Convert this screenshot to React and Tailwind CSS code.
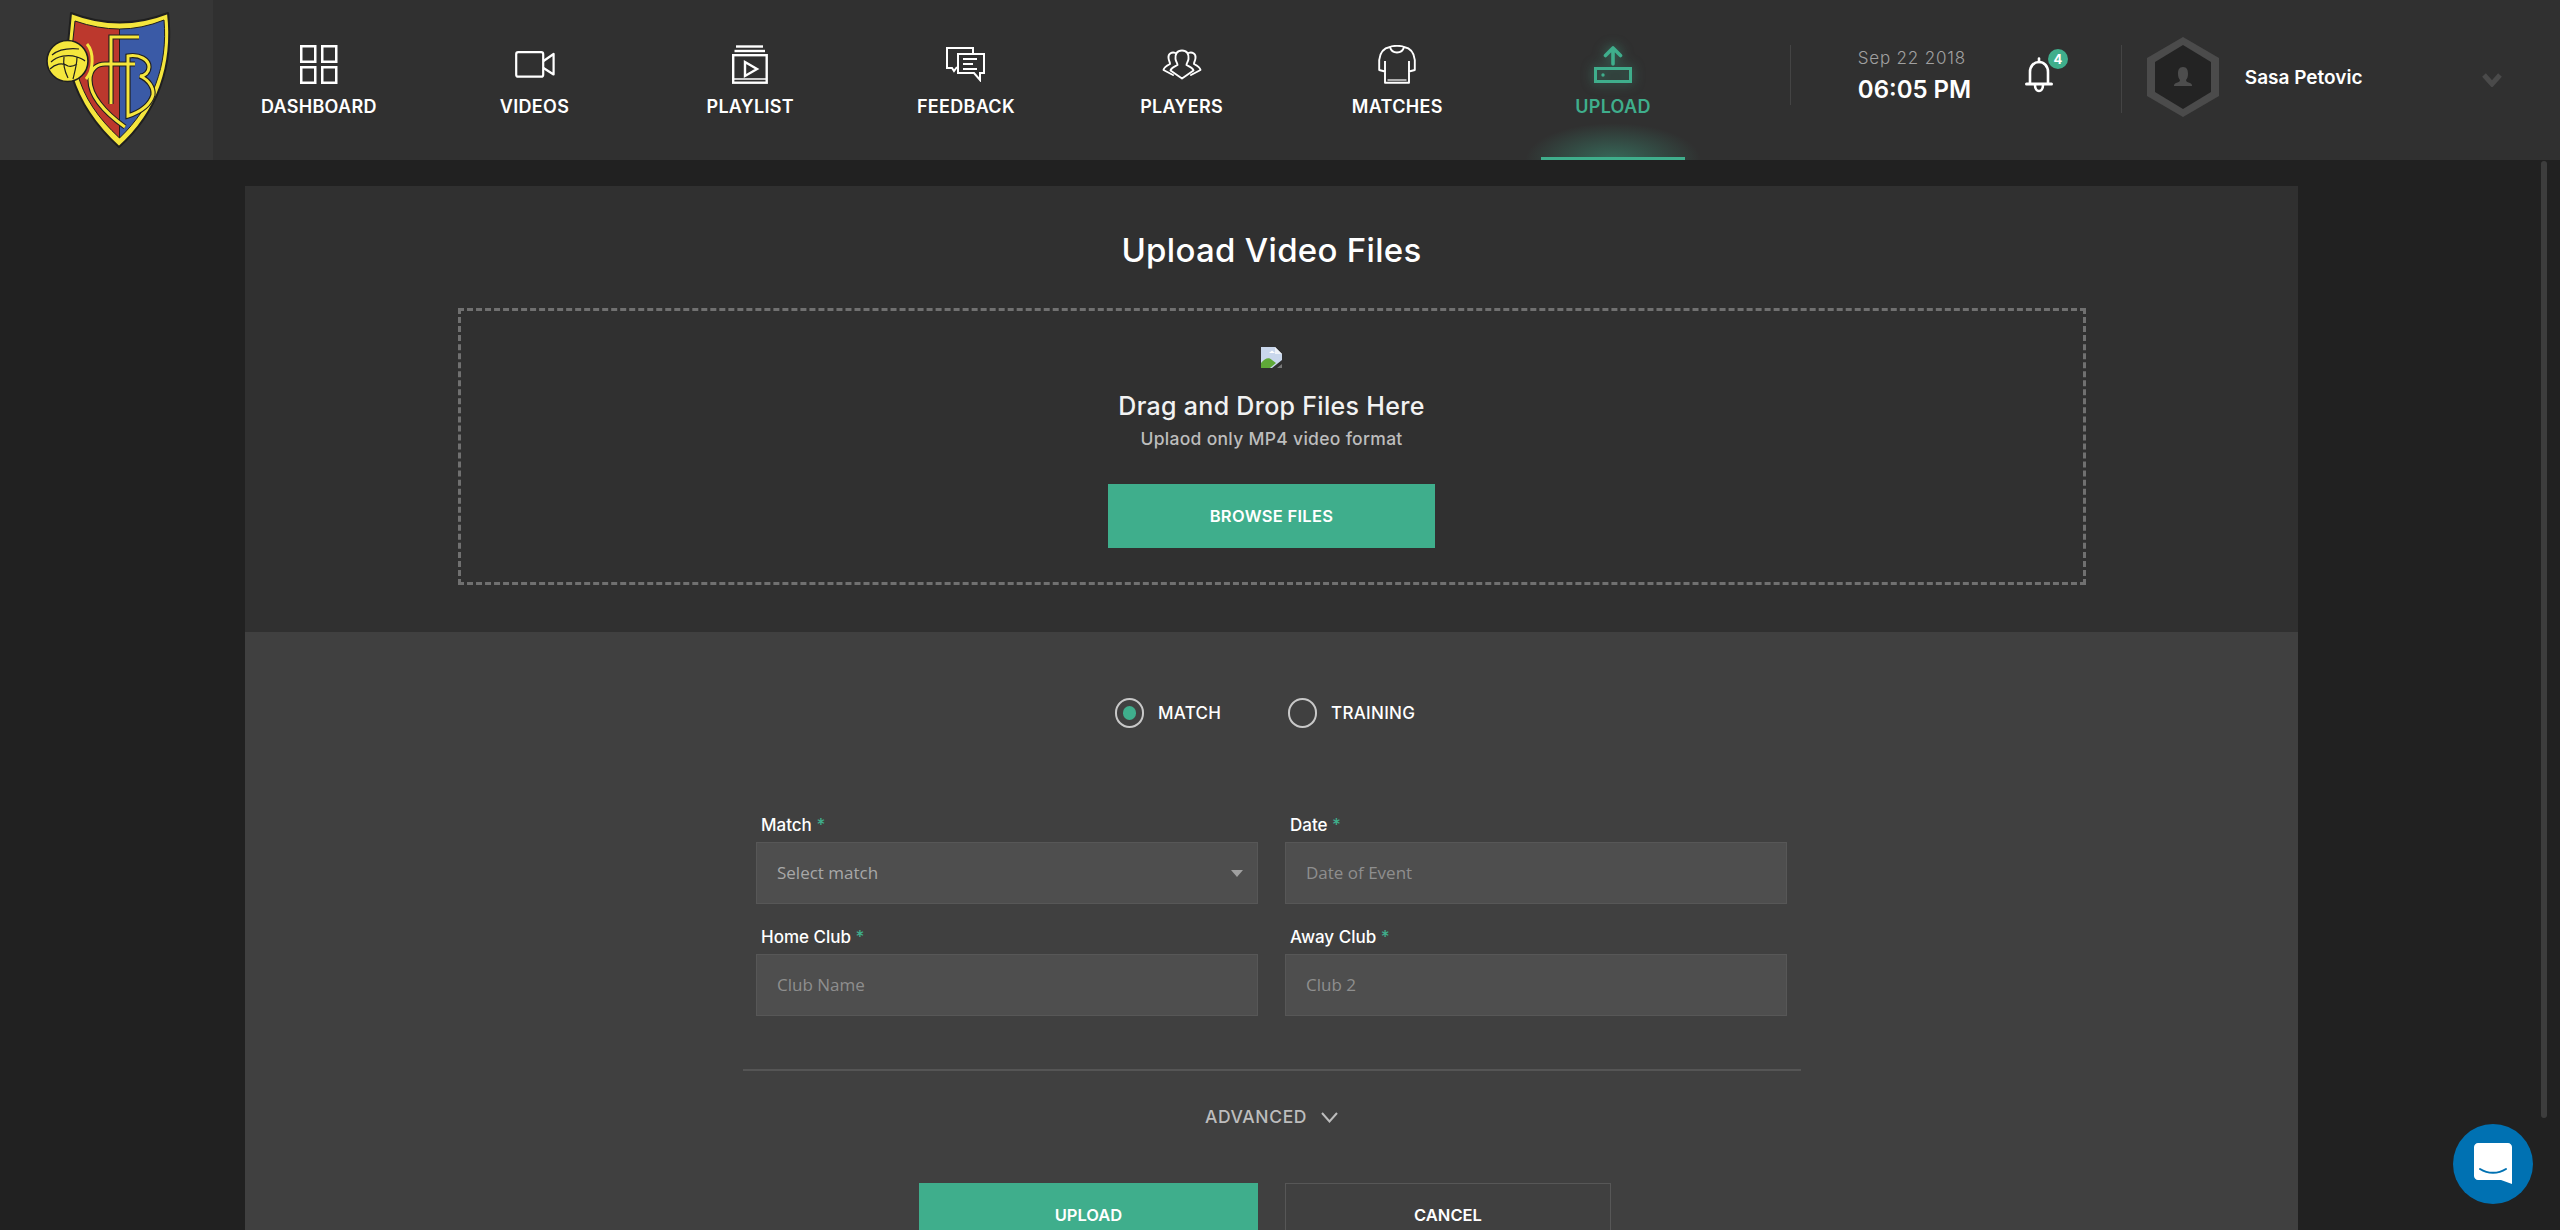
const Dashboard = () => (
  <svg width="38" height="39" viewBox="0 0 38 39" fill="none" stroke="white" strokeWidth="2.5">
    <rect x="1.25" y="1.25" width="14" height="15.5" />
    <rect x="22.25" y="1.25" width="14" height="15.5" />
    <rect x="1.25" y="22.25" width="14" height="15.5" />
    <rect x="22.25" y="22.25" width="14" height="15.5" />
  </svg>
);
const Videos = () => (
  <svg width="40" height="27" viewBox="0 0 40 27" fill="none" stroke="white" strokeWidth="2.2" strokeLinejoin="round">
    <rect x="1.2" y="1.2" width="27" height="24.5" rx="2" />
    <path d="M28.5 10 L38.6 3 V23.5 L28.5 17" />
  </svg>
);
const Playlist = () => (
  <svg width="36" height="39" viewBox="0 0 36 39" fill="none" stroke="white" strokeWidth="2.4">
    <path d="M4 1.5 H31" />
    <path d="M2.5 6 H33" />
    <rect x="1.2" y="10.2" width="33.5" height="27.5" />
    <path d="M13 17 L25 24 L13 31 Z" />
    <path d="M1 34 H35" strokeWidth="1.6" />
  </svg>
);
const Feedback = () => (
  <svg width="39" height="35" viewBox="0 0 39 35" fill="none" stroke="white" strokeWidth="2">
    <path d="M27 7 V1 H1 V21 H6 L8 24 L11 20" />
    <path d="M12 7 H38 V26 H34 V33 L28 26 H12 Z" />
    <path d="M17 12 H31 M17 17 H27 M17 22 H31" strokeWidth="2.2" />
  </svg>
);
const Players = () => (
  <svg width="40" height="31" viewBox="0 0 40 31" fill="none" stroke="white" strokeWidth="1.9" strokeLinejoin="round" strokeLinecap="round">
    <path d="M20 1.5 C15 1.5 13 5 13.5 10 C14 13 15.5 14 15.5 16 C12 18 9 19 8.5 21.5 L20 29.5 L31.5 21.5 C31 19 28 18 24.5 16 C24.5 14 26 13 26.5 10 C27 5 25 1.5 20 1.5 Z" />
    <path d="M13.5 4 C10 2.5 6 4.5 6.5 9 C6.8 12 8 13 8 15 C5 16.5 2 18 1.5 21 L11 26" />
    <path d="M26.5 4 C30 2.5 34 4.5 33.5 9 C33.2 12 32 13 32 15 C35 16.5 38 18 38.5 21 L29 26" />
  </svg>
);
const Shirt = () => (
  <svg width="38" height="39" viewBox="0 0 38 39" fill="none" stroke="white" strokeWidth="1.9" strokeLinejoin="round">
    <path d="M12 2 C6 3 2 7 1.2 15 V25 L7 26.5 V37.8 H31 V26.5 L36.8 25 V15 C36 7 32 3 26 2 C24 0.5 14 0.5 12 2 Z" />
    <path d="M12 2 C13 6 16 7.5 19 7.5 C22 7.5 25 6 26 2" />
    <path d="M7 26.5 V16 M31 26.5 V16" />
    <path d="M9.5 35 H28.5" strokeWidth="1.2" />
  </svg>
);
const UploadIcon = () => (
  <svg width="38" height="38" viewBox="0 0 38 38" fill="none" stroke="#3fae8c" className="drop-shadow-[0_0_6px_rgba(63,174,140,0.6)]">
    <path d="M19 18 V2.5 M11.5 9.5 L19 2 L26.5 9.5" strokeWidth="3.6" strokeLinecap="round" strokeLinejoin="round" />
    <rect x="1.5" y="22.5" width="35" height="13" strokeWidth="3" />
    <circle cx="9" cy="29" r="1.7" fill="#3fae8c" stroke="none" />
  </svg>
);
const Bell = () => (
  <svg width="28" height="36" viewBox="0 0 28 36" fill="none" stroke="white" strokeWidth="2.6" strokeLinecap="round">
    <path d="M14 1.5 V5" />
    <path d="M5 26 V15 C5 9 9 5 14 5 C19 5 23 9 23 15 V26" />
    <path d="M1.5 27 H26.5" strokeWidth="3" />
    <path d="M10 28 C10 36 18 36 18 28" />
  </svg>
);
const Avatar = () => (
  <svg width="72" height="80" viewBox="0 0 72 80">
    <polygon points="36,0 72,21 72,59 36,80 0,59 0,21" fill="#4b4b4b" />
    <polygon points="36,8 64,25 64,55 36,72 8,55 8,25" fill="#232323" />
    <path d="M36 30 C40 30 41 33 41 37 C41 40 40 42 39 43 C39 45 41 45 43 46 C45 47 45 48 45 49 H27 C27 48 27 47 29 46 C31 45 33 45 33 43 C32 42 31 40 31 37 C31 33 32 30 36 30 Z" fill="#4d4d4d" />
  </svg>
);
const Logo = () => (
  <svg width="213" height="160" viewBox="0 0 213 160" fill="none">
    <path d="M71 13 Q120 32 168 13 C174 65 158 112 119 147 C95 125 80 103 72 76 L68 44 Z" fill="#f5e63d" stroke="#1f1f1f" strokeWidth="2" strokeLinejoin="round" />
    <path d="M75 21 Q98 29 119.5 29 V138 C98 118 84 98 77 72 L72.5 44 Z" fill="#bc382d" stroke="#1f1f1f" strokeWidth="1" />
    <path d="M119.5 29 Q142 29 164 20 C168 65 153 106 119.5 138 Z" fill="#3a5aa6" stroke="#1f1f1f" strokeWidth="1" />
    <g strokeLinecap="butt" strokeLinejoin="miter">
      <g stroke="#1f1f1f" strokeWidth="5.2">
        <path d="M125 127 C104 112 90 95 90 80 C90 68 98 64 105 64 H135" />
        <path d="M139 37 H111 V104" />
        <path d="M128 116 V56 C140 54 149 60 149 67 C149 72 145 76 140 76 C149 80 154 88 153 95 C150 105 140 112 128 116 Z" />
      </g>
      <g stroke="#f5e63d" strokeWidth="3">
        <path d="M125 127 C104 112 90 95 90 80 C90 68 98 64 105 64 H135" />
        <path d="M139 37 H111 V104" />
        <path d="M128 116 V56 C140 54 149 60 149 67 C149 72 145 76 140 76 C149 80 154 88 153 95 C150 105 140 112 128 116 Z" />
      </g>
    </g>
    <path d="M87 44 C94 52 94 70 86 79" stroke="#f5e63d" strokeWidth="3" />
    <circle cx="67.5" cy="61" r="20.5" fill="#f5e63d" stroke="#1f1f1f" strokeWidth="1.6" />
    <path d="M52 55 C58 50 68 48 79 49 M51 62 C57 56 68 54 77 57 C80 58 83 59 85 61 M64 57 C63 64 65 72 68 78 M77 57 C77 64 75 71 73 79 M50 69 C55 64 62 62 68 66 C71 67 74 66 77 64" stroke="#1f1f1f" strokeWidth="1.2" />
  </svg>
);
const BrokenImage = () => (
  <svg width="21" height="21" viewBox="0 0 21 21">
    <path d="M0 0 H14 L21 7 V21 H0 Z" fill="#c9d7ec" />
    <path d="M14 0 L21 7 H14 Z" fill="#eef2f8" />
    <path d="M0 21 V16 C4 11 8 10 11 13 L15 16 L9 21 Z" fill="#5fa938" />
    <path d="M8 6 L11 3.5 L14 6 Z" fill="#ffffff" />
    <path d="M21 13 L11 21 H21 Z" fill="#303030" />
    <path d="M21 17 L16 21 H21 Z" fill="#777777" />
  </svg>
);
const ChatIcon = () => (
  <svg width="38" height="42" viewBox="0 0 38 42">
    <path d="M4 0 H34 C36 0 38 2 38 4 V41 L27 37 H4 C2 37 0 35 0 33 V4 C0 2 2 0 4 0 Z" fill="white" />
    <path d="M6 26 C14 31 24 31 32 26" fill="none" stroke="#0071b2" strokeWidth="2" strokeLinecap="round" />
  </svg>
);

const navItems = [
  ["DASHBOARD", <Dashboard />],
  ["VIDEOS", <Videos />],
  ["PLAYLIST", <Playlist />],
  ["FEEDBACK", <Feedback />],
  ["PLAYERS", <Players />],
  ["MATCHES", <Shirt />],
];

function Field({ label, children, arrow, muted }) {
  return (
    <div className="flex flex-col">
      <div className="h-5 pl-[5px] text-[17px] leading-5 font-medium text-white">
        {label} <span className="text-[#3fae8c]">*</span>
      </div>
      <div className="mt-[7px] h-[62px] flex items-center justify-between pl-5 pr-[14px] bg-[#4e4e4e] border border-[#575757] font-['Open_Sans',sans-serif] text-[17px] text-[#8e8e8e]">
        <span className={muted ? "text-[#a8a8a8]" : ""}>{children}</span>
        {arrow && <span className="w-0 h-0 border-x-[6.5px] border-x-transparent border-t-[7px] border-t-[#a0a0a0]" />}
      </div>
    </div>
  );
}

export default function App() {
  return (
    <div className="relative h-screen overflow-hidden flex flex-col bg-[#212121] font-['Inter',sans-serif] text-white">
      <header className="h-40 shrink-0 flex bg-[#303030]">
        <div className="w-[213px] shrink-0 bg-[#363636]">
          <Logo />
        </div>
        <nav className="flex -ml-[2px]">
          {navItems.map(([label, icon]) => (
            <div key={label} className="w-[215.7px] h-40 flex flex-col items-center">
              <div className="h-[39px] mt-[45px] flex items-center">{icon}</div>
              <div className="mt-[13px] text-[18px] leading-5 font-semibold tracking-[0.3px]">{label}</div>
            </div>
          ))}
          <div className="relative w-[215.7px] h-40 flex flex-col items-center">
            <div className="h-[39px] mt-[45px] flex items-center"><UploadIcon /></div>
            <div className="mt-[13px] text-[18px] leading-5 font-semibold tracking-[0.3px] text-[#3fae8c]">UPLOAD</div>
            <div className="absolute bottom-0 left-1/2 -translate-x-1/2 w-[200px] h-[42px] bg-[radial-gradient(ellipse_at_bottom,rgba(63,174,140,0.45),rgba(63,174,140,0)_62%)]" />
            <div className="absolute bottom-0 left-1/2 -translate-x-1/2 w-[144px] h-[3px] bg-[#3fae8c]" />
          </div>
        </nav>
        <div className="ml-[69px] mt-[45px] w-px h-[60px] bg-[#444444]" />
        <div className="ml-[67px] mt-[46px] w-[120px]">
          <div className="h-6 text-[17px] leading-6 font-light tracking-[0.8px] text-[#a0a0a0] whitespace-nowrap">Sep 22 2018</div>
          <div className="mt-[6px] h-7 text-[24px] leading-7 font-semibold whitespace-nowrap">06:05 PM</div>
        </div>
        <div className="relative ml-[47px] mt-[57px] h-9 w-7">
          <Bell />
          <div className="absolute -top-[8px] left-[23px] w-5 h-5 rounded-full bg-[#3fae8c] flex items-center justify-center text-[13px] font-bold leading-none">4</div>
        </div>
        <div className="ml-[68px] mt-[45px] w-px h-[68px] bg-[#444444]" />
        <div className="ml-[25px] mt-[37px]"><Avatar /></div>
        <div className="ml-[26px] mt-[66px] h-6 w-[237px] text-[19px] leading-6 font-semibold whitespace-nowrap">Sasa Petovic</div>
        <div className="mt-[73px]">
          <svg width="20" height="14" viewBox="0 0 20 14" fill="none" stroke="#4a4a4a" strokeWidth="5">
            <path d="M2 2 L10 11 L18 2" />
          </svg>
        </div>
      </header>

      <main className="flex-1 min-h-0 pt-[26px] pl-[245px]">
        <div className="w-[2053px]">
          <section className="h-[446px] bg-[#303030] flex flex-col items-center pt-[44px]">
            <h1 className="h-10 text-[33px] leading-10 font-medium tracking-[0.3px]">Upload Video Files</h1>
            <div className="mt-[38px] w-[1628px] h-[277px] border-[3px] border-dashed border-[#707070] flex flex-col items-center pt-[36px]">
              <BrokenImage />
              <div className="mt-[23px] h-[30px] text-[25px] leading-[30px] font-medium tracking-[0.3px] text-[#f2f2f2]">Drag and Drop Files Here</div>
              <div className="mt-[6px] h-6 text-[17.5px] leading-6 font-medium tracking-[0.3px] text-[#bdbdbd]">Uplaod only MP4 video format</div>
              <div className="mt-[33px] w-[327px] h-16 flex items-center justify-center bg-[#3fae8c] text-[16.5px] font-semibold tracking-[0.3px]">BROWSE FILES</div>
            </div>
          </section>

          <section className="bg-[#404040] h-[700px] pt-[66px]">
            <div className="flex justify-center pr-[11px] h-[30px] items-center text-[17px] font-medium tracking-[0.3px]">
              <span className="w-[29px] h-[30px] rounded-full border-2 border-[#c8c8c8] flex items-center justify-center">
                <span className="w-[13px] h-[14px] rounded-full bg-[#3fae8c]" />
              </span>
              <span className="ml-[14px] w-[130px] pt-[1px]">MATCH</span>
              <span className="w-[29px] h-[30px] rounded-full border-2 border-[#c8c8c8]" />
              <span className="ml-[14px] w-[86px] pt-[1px] whitespace-nowrap">TRAINING</span>
            </div>

            <div className="mt-[87px] mx-auto w-[1031px] grid grid-cols-2 gap-x-[27px] gap-y-[23px]">
              <Field label="Match" arrow muted>Select match</Field>
              <Field label="Date">Date of Event</Field>
              <Field label="Home Club">Club Name</Field>
              <Field label="Away Club">Club 2</Field>
            </div>

            <div className="mt-[53px] mx-auto w-[1058px] h-[2px] bg-[#555555]" />

            <div className="mt-[34px] h-6 flex items-center justify-center text-[17.5px] font-medium tracking-[0.6px] text-[#bdbdbd]">
              ADVANCED
              <svg className="ml-[14px]" width="17" height="11" viewBox="0 0 17 11" fill="none" stroke="#bdbdbd" strokeWidth="2">
                <path d="M1 1 L8.5 9.5 L16 1" />
              </svg>
            </div>

            <div className="mt-[54px] pl-[674px] flex gap-[27px]">
              <div className="w-[339px] h-16 flex items-center justify-center bg-[#3fae8c] text-[16.5px] font-semibold">UPLOAD</div>
              <div className="w-[326px] h-16 flex items-center justify-center border border-[#575757] text-[16.5px] font-semibold">CANCEL</div>
            </div>
          </section>
        </div>
      </main>

      <div className="absolute left-[2541px] top-[161px] w-[6px] h-[957px] rounded-[3px] bg-[#3d3d3d]" />
      <div className="absolute left-[2453px] top-[1124px] w-20 h-20 rounded-full bg-[#0071b2] flex items-center justify-center">
        <ChatIcon />
      </div>
    </div>
  );
}
